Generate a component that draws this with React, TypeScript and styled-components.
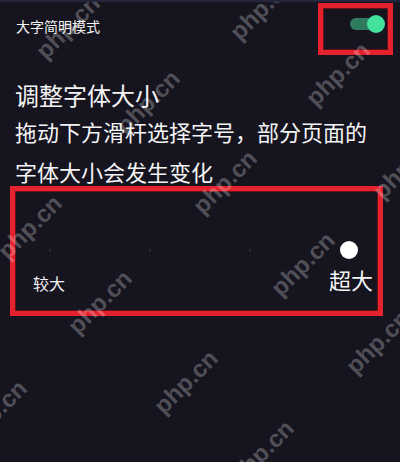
import React from "react";
import styled, { createGlobalStyle } from "styled-components";

const GlobalStyle = createGlobalStyle`
  html, body {
    margin: 0;
    padding: 0;
    background: #16141e;
  }
  body {
    font-family: "Noto Sans CJK SC", "Noto Sans", sans-serif;
    color: #f4f4f6;
  }
`;

const Page = styled.div`
  position: relative;
  width: 400px;
  height: 462px;
  overflow: hidden;
  background: #16141e;
  border-top: 2px solid #23263a;
  box-sizing: border-box;
  padding-top: 1px;
`;

const Row = styled.div`
  display: flex;
  justify-content: space-between;
  align-items: flex-start;
  padding: 0 7px 0 16px;
`;

const RowLabel = styled.div`
  margin-top: 13px;
  font-size: 14px;
  line-height: 20px;
`;

const HighlightBox = styled.div`
  box-sizing: border-box;
  border: 5px solid #e3222d;
  box-shadow: inset 0 0 0 1px #6a1118;
`;

const ToggleBox = styled(HighlightBox)`
  width: 75px;
  height: 52px;
  display: flex;
  justify-content: flex-end;
  align-items: flex-start;
  padding: 7px 3px 0 0;
`;

const Switch = styled.div`
  position: relative;
  width: 35px;
  height: 18px;
`;

const SwitchTrack = styled.div`
  position: absolute;
  left: 0;
  top: 3px;
  width: 30px;
  height: 12px;
  border-radius: 6px;
  background: #2f7b5f;
`;

const SwitchKnob = styled.div`
  position: absolute;
  right: 0;
  top: 0;
  width: 18px;
  height: 18px;
  border-radius: 50%;
  background: #44e09d;
`;

const Section = styled.div`
  padding: 0 15px;
`;

const Title = styled.div`
  margin-top: 24px;
  font-size: 24px;
  line-height: 32px;
`;

const Desc = styled.div`
  font-size: 22px;
  line-height: 40px;
`;

const SliderBox = styled(HighlightBox)`
  margin: -5px 17px 0 10px;
  height: 130px;
  display: flex;
  flex-direction: column;
`;

const Track = styled.div`
  display: flex;
  align-items: center;
  gap: 98px;
  margin-top: 50px;
  padding-left: 34px;
  height: 18px;
`;

const Tick = styled.div`
  width: 2px;
  height: 3px;
  background: #272532;
`;

const Thumb = styled.div`
  margin-left: -9px;
  width: 18px;
  height: 18px;
  border-radius: 50%;
  background: #ffffff;
`;

const Labels = styled.div`
  display: flex;
  justify-content: space-between;
  align-items: flex-start;
  padding: 0 5px 0 18px;
`;

const SizeLabel = styled.div<{ $big?: boolean }>`
  font-size: ${({ $big }) => ($big ? "22px" : "16px")};
  line-height: ${({ $big }) => ($big ? "28px" : "22px")};
  margin-top: ${({ $big }) => ($big ? "6px" : "13px")};
`;

const Watermarks = styled.div`
  position: absolute;
  inset: 0;
  pointer-events: none;
`;

const Mark = styled.span<{ $x: number; $y: number }>`
  position: absolute;
  left: ${({ $x }) => $x}px;
  top: ${({ $y }) => $y}px;
  transform: translate(-50%, -50%) rotate(-45deg);
  font-family: "Liberation Sans", Arial, sans-serif;
  font-weight: bold;
  font-size: 24px;
  color: rgba(255, 255, 255, 0.26);
  white-space: nowrap;
`;

const marks: [number, number][] = [
  [68, 25],
  [262, 6],
  [338, 72],
  [148, 100],
  [405, 165],
  [225, 180],
  [30, 225],
  [303, 262],
  [100, 300],
  [378, 340],
  [186, 380],
  [-5, 410],
  [262, 450],
];

export default function App() {
  return (
    <>
      <GlobalStyle />
      <Page>
        <Row>
          <RowLabel>大字简明模式</RowLabel>
          <ToggleBox>
            <Switch>
              <SwitchTrack />
              <SwitchKnob />
            </Switch>
          </ToggleBox>
        </Row>
        <Section>
          <Title>调整字体大小</Title>
          <Desc>
            拖动下方滑杆选择字号，部分页面的
            <br />
            字体大小会发生变化
          </Desc>
        </Section>
        <SliderBox>
          <Track>
            <Tick />
            <Tick />
            <Tick />
            <Thumb />
          </Track>
          <Labels>
            <SizeLabel>较大</SizeLabel>
            <SizeLabel $big>超大</SizeLabel>
          </Labels>
        </SliderBox>
        <Watermarks>
          {marks.map(([x, y], i) => (
            <Mark key={i} $x={x} $y={y}>
              php.cn
            </Mark>
          ))}
        </Watermarks>
      </Page>
    </>
  );
}
